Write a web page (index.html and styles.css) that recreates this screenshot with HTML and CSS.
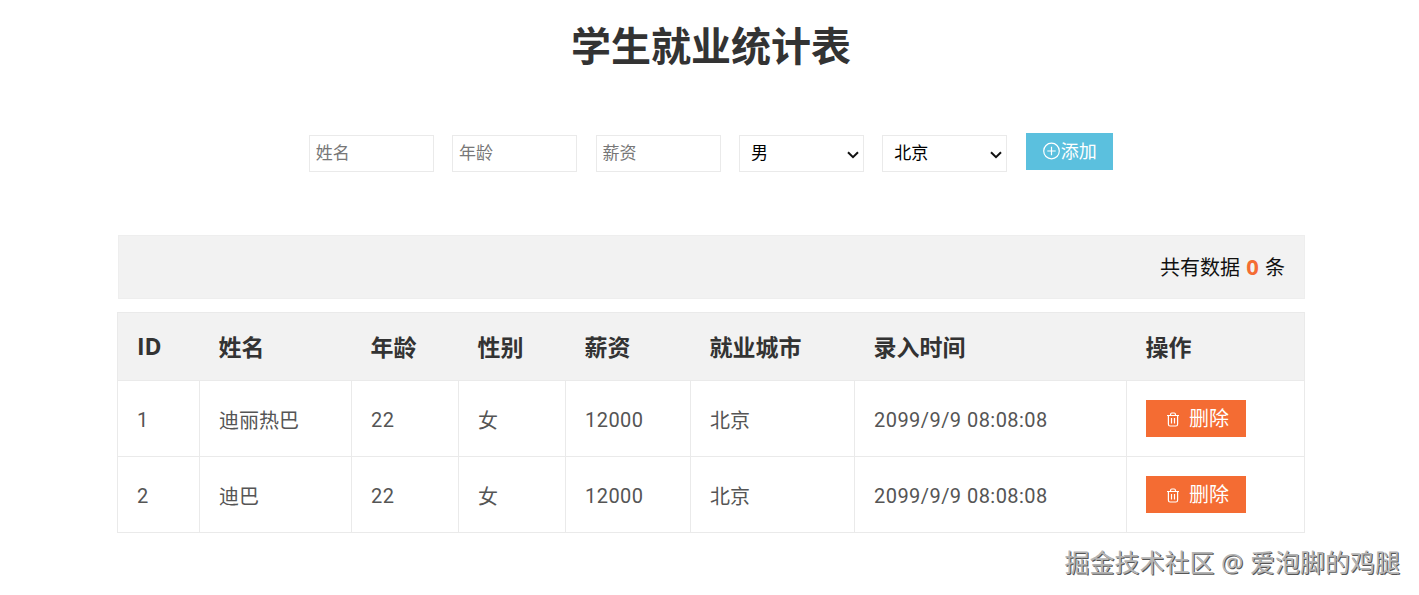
FILE: index.html
```html
<!DOCTYPE html>
<html lang="zh">
<head>
<meta charset="utf-8">
<title>学生就业统计表</title>
<link rel="stylesheet" href="styles.css">
</head>
<body>
<main class="page">
  <h1 class="title">学生就业统计表</h1>
  <form class="add-form">
    <input class="field" type="text" placeholder="姓名">
    <input class="field" type="text" placeholder="年龄">
    <input class="field" type="text" placeholder="薪资">
    <select class="field select"><option>男</option><option>女</option></select>
    <select class="field select"><option>北京</option><option>上海</option></select>
    <button class="add-btn" type="button">
      <svg class="add-icon" viewBox="0 0 18 18" aria-hidden="true"><circle cx="9" cy="9" r="7.8"/><path d="M9 4.8v8.4M4.8 9h8.4"/></svg>添加
    </button>
  </form>
  <div class="summary">共有数据 <b class="count">0</b> 条</div>
  <table class="grid">
    <colgroup>
      <col class="c1"><col class="c2"><col class="c3"><col class="c4"><col class="c5"><col class="c6"><col class="c7"><col class="c8">
    </colgroup>
    <thead>
      <tr><th>ID</th><th>姓名</th><th>年龄</th><th>性别</th><th>薪资</th><th>就业城市</th><th>录入时间</th><th>操作</th></tr>
    </thead>
    <tbody>
      <tr>
        <td class="num">1</td><td>迪丽热巴</td><td class="num">22</td><td>女</td><td class="num">12000</td><td>北京</td><td class="num">2099/9/9 08:08:08</td>
        <td><button class="del-btn" type="button"><svg class="del-icon" viewBox="0 0 14 15" aria-hidden="true"><path d="M1 3.5h12M4.6 3.3V2.2c0-.7.5-1.2 1.2-1.2h2.4c.7 0 1.2.5 1.2 1.2v1.1M2.4 3.6v8.6c0 1 .7 1.8 1.7 1.8h5.8c1 0 1.7-.8 1.7-1.8V3.6M5.5 6v5.6M8.5 6v5.6"/></svg>删除</button></td>
      </tr>
      <tr>
        <td class="num">2</td><td>迪巴</td><td class="num">22</td><td>女</td><td class="num">12000</td><td>北京</td><td class="num">2099/9/9 08:08:08</td>
        <td><button class="del-btn" type="button"><svg class="del-icon" viewBox="0 0 14 15" aria-hidden="true"><path d="M1 3.5h12M4.6 3.3V2.2c0-.7.5-1.2 1.2-1.2h2.4c.7 0 1.2.5 1.2 1.2v1.1M2.4 3.6v8.6c0 1 .7 1.8 1.7 1.8h5.8c1 0 1.7-.8 1.7-1.8V3.6M5.5 6v5.6M8.5 6v5.6"/></svg>删除</button></td>
      </tr>
    </tbody>
  </table>
</main>
<div class="watermark">掘金技术社区 @ 爱泡脚的鸡腿</div>
</body>
</html>
```
FILE: styles.css
```css
* { box-sizing: border-box; }
html, body { margin: 0; height: 100%; }
body {
  padding-left: 3px;
  background: #fff;
  color: #333;
  font-family: "Open Sans", "Noto Sans CJK SC", sans-serif;
  overflow: hidden;
}
.page { width: 1188px; margin: 0 auto; }
.title {
  margin: 0;
  padding-top: 20px;
  height: 133px;
  text-align: center;
  font-size: 40px;
  line-height: 52px;
  font-weight: 700;
  color: #333;
}
.add-form {
  display: flex;
  justify-content: center;
  align-items: flex-start;
  gap: 18.4px;
  height: 102px;
  padding-right: .6px;
}
.field {
  width: 125px;
  height: 37px;
  margin-top: 2px;
  border: 1px solid #eaeaea;
  background: #fff;
  padding: 0 6px 3px;
  font: 17px/1 "Open Sans", "Noto Sans CJK SC", sans-serif;
  color: #000;
  outline: none;
  border-radius: 0;
}
.field::placeholder { color: #777; }
.select {
  appearance: none;
  padding: 0 24px 3px 11px;
  background: #fff url("data:image/svg+xml,%3Csvg xmlns='http://www.w3.org/2000/svg' width='12' height='8'%3E%3Cpath d='M1 1.2l5 5 5-5' fill='none' stroke='%23111' stroke-width='2'/%3E%3C/svg%3E") no-repeat 107px 15px;
}
.add-btn {
  display: flex;
  align-items: center;
  justify-content: center;
  width: 87px;
  height: 37px;
  border: 0;
  padding: 0 0 2px;
  background: #5bc0de;
  color: #fff;
  font: 18px/1 "Open Sans", "Noto Sans CJK SC", sans-serif;
}
.add-icon { width: 19px; height: 18px; fill: none; stroke: #fff; stroke-width: 1.2; }
.summary {
  height: 64px;
  margin-left: 1px;
  padding-right: 19px;
  background: #f2f2f2;
  border: 1px solid #eeeeee;
  text-align: right;
  font-size: 20px;
  line-height: 63px;
  color: #111;
}
.count { margin: 0 1px; color: #f46c33; font-size: 22px; line-height: 1; }
.grid {
  width: 1187px;
  margin-top: 13px;
  table-layout: fixed;
  border-collapse: collapse;
  border: 1px solid #eaeaea;
}
.c1 { width: 82px; } .c2 { width: 152px; } .c3 { width: 107px; } .c4 { width: 107px; }
.c5 { width: 125px; } .c6 { width: 164px; } .c7 { width: 272px; } .c8 { width: 178px; }
th, td { padding: 0 19px; text-align: left; }
th {
  height: 68px;
  padding-bottom: 2px;
  background: #f2f2f2;
  color: #333;
  font-size: 23px;
  font-weight: 700;
}
td {
  height: 76px;
  padding-top: 2px;
  border: 1px solid #eaeaea;
  color: #555;
  font-size: 20px;
}
.num { font-family: Roboto, "Noto Sans CJK SC", sans-serif; letter-spacing: .45px; }
.del-btn {
  display: flex;
  align-items: center;
  gap: 9px;
  width: 100px;
  height: 37px;
  margin-top: -2px;
  border: 0;
  padding: 1px 0 0 20px;
  background: #f46c33;
  color: #fff;
  font: 20px/1 "Open Sans", "Noto Sans CJK SC", sans-serif;
}
.del-icon { width: 14px; height: 15px; fill: none; stroke: #fff; stroke-width: 1.2; }
.watermark {
  position: absolute;
  right: 19px;
  top: 547px;
  font: 25px/30px "Open Sans", "Noto Sans CJK SC", sans-serif;
  color: #b4b4b4;
  text-shadow: 1px 1px 0 #555;
}
```
